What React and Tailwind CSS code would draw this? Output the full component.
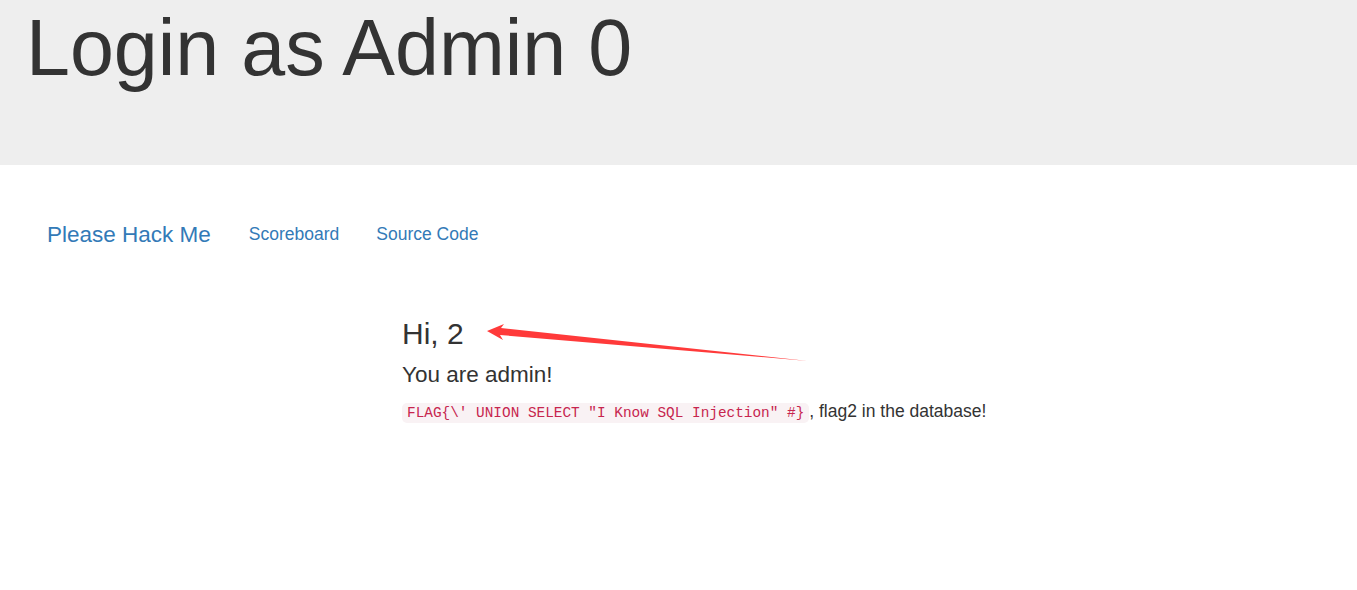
import React from 'react';

const App = () => {
  return (
    <div className="relative min-h-[590px] bg-white text-[#333] font-['Liberation_Sans',Arial,sans-serif]">
      {/* jumbotron */}
      <div className="h-[165px] bg-[#eeeeee] px-[26px]">
        <h1 className="pt-[5px] text-[79px] leading-[1.1] font-normal">Login as Admin 0</h1>
      </div>

      {/* navbar */}
      <nav className="mt-[57px] flex items-center pl-[47px] leading-[25px] text-[#337ab7]">
        <a href="#" className="text-[22.5px]">Please Hack Me</a>
        <a href="#" className="ml-[38px] text-[17.5px]">Scoreboard</a>
        <a href="#" className="ml-[37px] text-[17.5px]">Source Code</a>
      </nav>

      {/* content */}
      <div className="mt-[70px] pl-[402px]">
        <h3 className="text-[30px] leading-[33px] font-normal">Hi, 2</h3>
        <h4 className="mt-[13px] text-[22.5px] leading-[24.75px] font-normal">You are admin!</h4>
        <p className="mt-[11px] text-[17.5px] leading-[25px]">
          <code className="rounded-[5px] bg-[#f9f2f4] px-[5px] py-[2px] text-[14.4px] text-[#c7254e] font-['Liberation_Mono',monospace]">
            FLAG{"{"}\' UNION SELECT "I Know SQL Injection" #{"}"}
          </code>
          , flag2 in the database!
        </p>
      </div>

      {/* annotation arrow */}
      <svg className="pointer-events-none absolute left-0 top-0" width="1357" height="590">
        <polygon
          points="487,331 504,324 501,328 808,361 500,335 503,340"
          fill="#ff3a3a"
        />
      </svg>
    </div>
  );
};

export default App;
